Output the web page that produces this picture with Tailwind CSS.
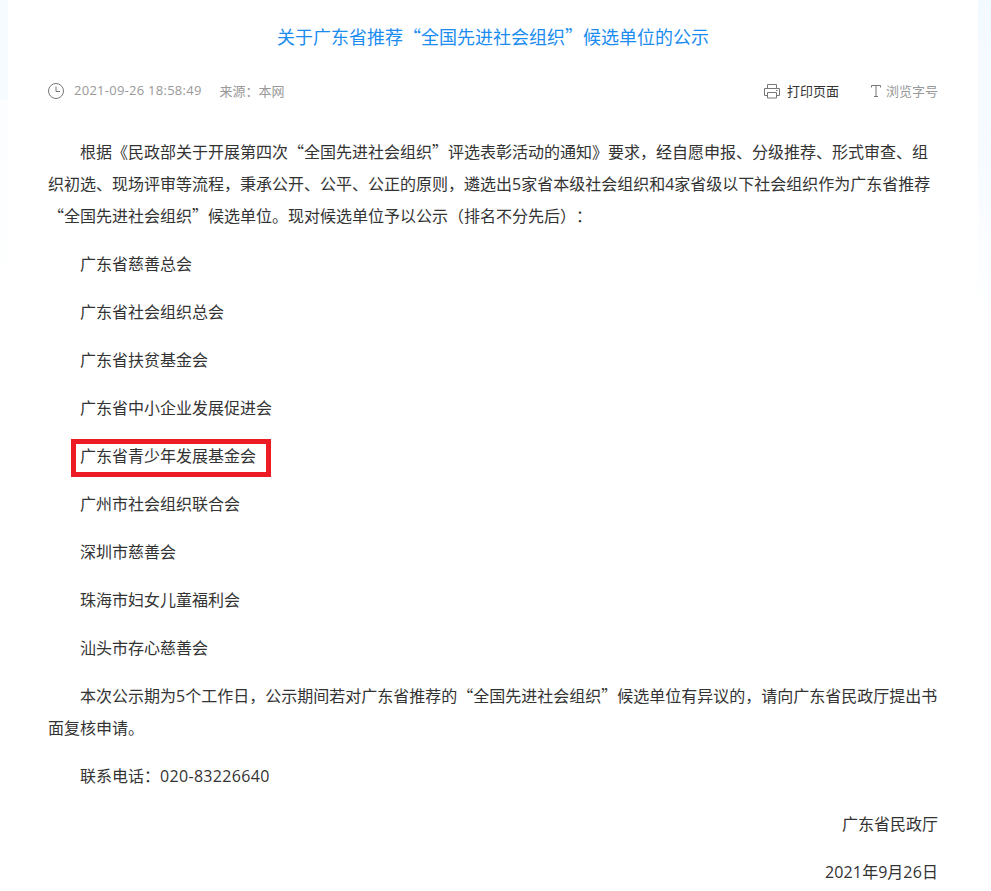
<!DOCTYPE html>
<html lang="zh-CN">
<head>
<meta charset="utf-8">
<script src="https://cdn.jsdelivr.net/npm/@tailwindcss/browser@4"></script>
</head>
<body class="bg-white font-['Noto_Sans_CJK_SC',sans-serif] overflow-hidden [text-spacing-trim:space-all]">
<div class="relative w-[991px] h-[891px] overflow-hidden bg-white">
  <div class="absolute left-0 top-0 w-2 h-[100px] bg-[#f6fbff]"></div>
  <div class="absolute left-0 top-[100px] w-2 h-[220px] bg-gradient-to-b from-[#fbfdff] to-white"></div>
  <div class="absolute right-0 top-0 w-[13px] h-[320px] bg-gradient-to-b from-[#f3faff] via-[#f7fbff] to-white"></div>
  <main class="relative mx-[48px] w-[890px]">
    <h1 class="pt-[23px] h-[50px] text-center text-[18px] leading-[27px] font-normal text-[#1a8cf0]">关于广东省推荐“全国先进社会组织”候选单位的公示</h1>
    <div class="mt-[29px] h-[24px] flex items-center justify-between text-[13px] text-[#999]">
      <div class="flex items-center">
        <svg class="w-4 h-4 mr-[10px]" viewBox="0 0 16 16" fill="none" stroke="#777" stroke-width="1"><circle cx="8" cy="8" r="7.5"/><path d="M8 3.5V8.5H12"/></svg>
        <span class="font-['Open_Sans',sans-serif] tracking-[0.02em]">2021-09-26 18:58:49</span><span class="ml-[18px]">来源：本网</span>
      </div>
      <div class="flex items-center">
        <svg class="w-4 h-4 mr-[7px]" viewBox="0 0 16 16" fill="none" stroke="#777" stroke-width="1"><path d="M3.5 5V1.5H12.5V5M3.5 12.5H.5V5.5H15.5V12.5H12.5M3.5 9.5H12.5V15H3.5ZM12 7.5H13.5"/></svg>
        <span class="text-[#333]">打印页面</span>
        <svg class="w-[10px] h-[12px] ml-[32px] mr-[5px]" viewBox="0 0 10 12" fill="none" stroke="#777" stroke-width="1"><path d="M.5 2.5V.5H9.5V2.5M5 .5V11.5M3 11.5H7"/></svg>
        <span>浏览字号</span>
      </div>
    </div>
    <article class="mt-[32px] text-[16px] leading-[32px] text-[#333]">
      <p class="mb-4 indent-8">根据《民政部关于开展第四次“全国先进社会组织”评选表彰活动的通知》要求，经自愿申报、分级推荐、形式审查、组织初选、现场评审等流程，秉承公开、公平、公正的原则，遴选出<span class="font-['Open_Sans',sans-serif] leading-none">5</span>家省本级社会组织和<span class="font-['Open_Sans',sans-serif] leading-none">4</span>家省级以下社会组织作为广东省推荐“全国先进社会组织”候选单位。现对候选单位予以公示（排名不分先后）：</p>
      <p class="mb-4 indent-8">广东省慈善总会</p>
      <p class="mb-4 indent-8">广东省社会组织总会</p>
      <p class="mb-4 indent-8">广东省扶贫基金会</p>
      <p class="mb-4 indent-8">广东省中小企业发展促进会</p>
      <p class="mb-4 indent-8">广东省青少年发展基金会</p>
      <p class="mb-4 indent-8">广州市社会组织联合会</p>
      <p class="mb-4 indent-8">深圳市慈善会</p>
      <p class="mb-4 indent-8">珠海市妇女儿童福利会</p>
      <p class="mb-4 indent-8">汕头市存心慈善会</p>
      <p class="mb-4 indent-8">本次公示期为<span class="font-['Open_Sans',sans-serif] leading-none">5</span>个工作日，公示期间若对广东省推荐的“全国先进社会组织”候选单位有异议的，请向广东省民政厅提出书面复核申请。</p>
      <p class="mb-4 indent-8">联系电话：<span class="font-['Open_Sans',sans-serif] leading-none tracking-[0.02em]">020-83226640</span></p>
      <p class="mb-4 text-right">广东省民政厅</p>
      <p class="text-right"><span class="font-['Open_Sans',sans-serif] leading-none tracking-[0.01em]">2021</span>年<span class="font-['Open_Sans',sans-serif] leading-none">9</span>月<span class="font-['Open_Sans',sans-serif] leading-none tracking-[0.01em]">26</span>日</p>
    </article>
  </main>
  <div class="absolute left-[71px] top-[439px] w-[200px] h-[38px] border-[5px] border-[#ed1c24]"></div>
</div>
</body>
</html>
